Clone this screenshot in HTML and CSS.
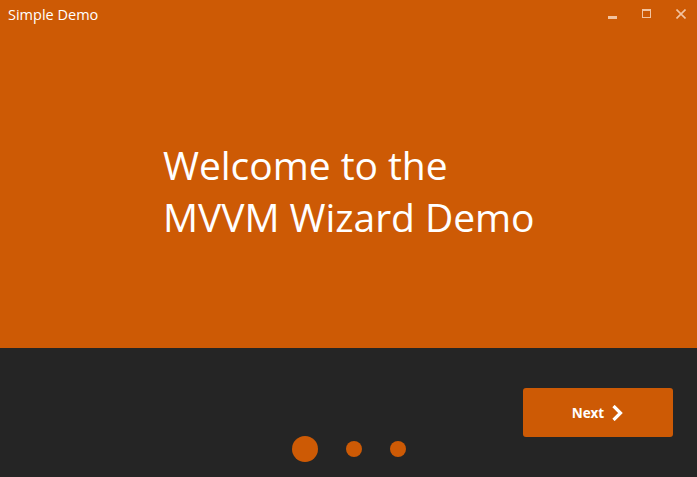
FILE: index.html
```html
<!DOCTYPE html>
<html>
<head>
<meta charset="utf-8">
<link rel="stylesheet" href="styles.css">
</head>
<body>
<div class="window">
  <div class="main">
    <div class="titlebar">
      <span class="title">Simple Demo</span>
      <div class="controls">
        <span class="ctl ctl-min"></span>
        <span class="ctl ctl-max"></span>
        <svg class="ctl-close" width="10" height="10" viewBox="0 0 10 10"><path d="M0.5 0.5 L9.5 9.5 M9.5 0.5 L0.5 9.5" stroke="currentColor" stroke-width="1.6"/></svg>
      </div>
    </div>
    <div class="hero">
      <h1 class="heading">Welcome to the<br>MVVM Wizard Demo</h1>
    </div>
  </div>
  <div class="footer">
    <div class="actions">
      <button class="next-btn">Next
        <svg class="chev" width="14" height="16" viewBox="0 0 14 16"><path d="M2.5 1 L9.5 8 L2.5 15" fill="none" stroke="#fff" stroke-width="3.2"/></svg>
      </button>
    </div>
    <div class="dots">
      <span class="dot dot-active"></span>
      <span class="dot"></span>
      <span class="dot"></span>
    </div>
  </div>
</div>
</body>
</html>
```
FILE: styles.css
```css
html, body {
  margin: 0;
  padding: 0;
}
body {
  font-family: "Open Sans", "Noto Sans", sans-serif;
  background: #252525;
}
.window {
  width: 697px;
  height: 477px;
  display: flex;
  flex-direction: column;
  overflow: hidden;
}
.main {
  height: 348px;
  flex-shrink: 0;
  background: #cd5a05;
  display: flex;
  flex-direction: column;
}
.titlebar {
  height: 30px;
  display: flex;
  align-items: flex-start;
  justify-content: space-between;
}
.title {
  color: #fff;
  font-size: 14.5px;
  margin: 5px 0 0 8px;
  line-height: 20px;
}
.controls {
  display: flex;
  align-items: flex-start;
  margin: 9px 11px 0 0;
  color: #f2c3a0;
}
.ctl {
  display: block;
  box-sizing: border-box;
}
.ctl-min {
  width: 9px;
  height: 3px;
  background: #f2c3a0;
  margin: 7px 25px 0 0;
}
.ctl-max {
  width: 9px;
  height: 9px;
  border: 1px solid #f2c3a0;
  border-top-width: 2px;
  margin: 0 25px 0 0;
}
.ctl-close {
  display: block;
}
.hero {
  flex: 1;
  padding-left: 163px;
  padding-top: 109px;
}
.heading {
  margin: 0;
  color: #fff;
  font-weight: 400;
  font-size: 39px;
  line-height: 52px;
  letter-spacing: -0.05px;
}
.footer {
  flex: 1;
  background: #252525;
  display: flex;
  flex-direction: column;
}
.actions {
  display: flex;
  justify-content: flex-end;
  padding: 40px 24px 0 0;
}
.next-btn {
  width: 150px;
  height: 49px;
  border: none;
  border-radius: 3px;
  background: #cd5a05;
  color: #fff;
  font-family: "Noto Sans", "Open Sans", sans-serif;
  font-weight: 700;
  font-size: 13.5px;
  display: flex;
  align-items: center;
  justify-content: center;
  gap: 7px;
  padding: 0 0 0 1px;
}
.chev {
  display: block;
}
.dots {
  display: flex;
  justify-content: center;
  align-items: center;
  gap: 28px;
  margin-top: -1px;
  height: 26px;
}
.dot {
  width: 16px;
  height: 16px;
  border-radius: 50%;
  background: #cd5a05;
}
.dot-active {
  width: 26px;
  height: 26px;
}
```
